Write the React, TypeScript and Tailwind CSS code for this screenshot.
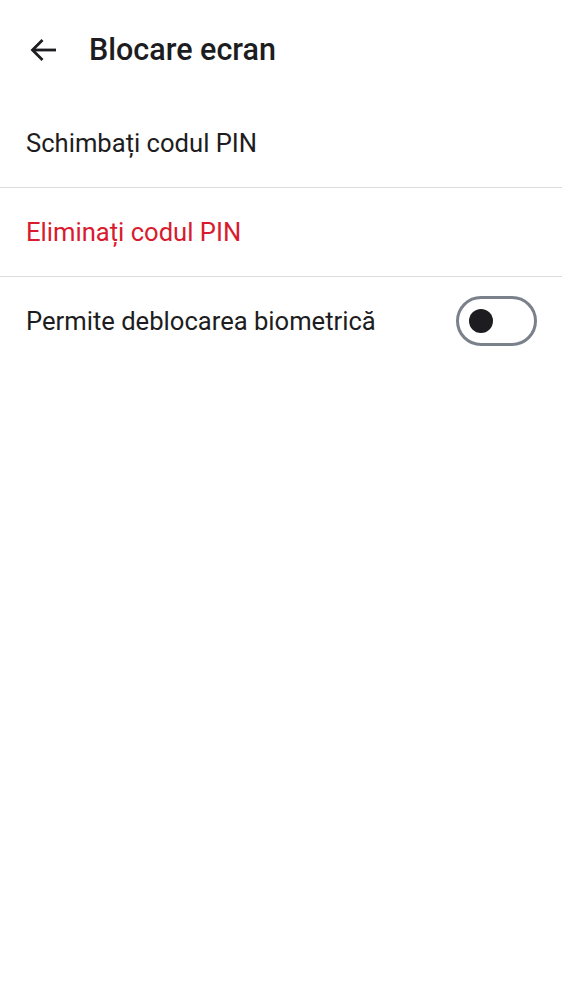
import { useState } from 'react';

export default function App() {
    const [biometric, setBiometric] = useState(false);

    return (
        <main className="min-h-screen w-[562px] bg-white text-[#1d1d21] font-['Roboto',sans-serif]">
            {/* Header */}
            <div className="flex h-[100px] items-center pl-[30px]">
                <button className="flex h-[26px] w-[27px] items-center justify-center">
                    <svg width="27" height="26" viewBox="0 0 27 26" fill="none" stroke="#1d1d21" strokeWidth="2.8" strokeLinecap="butt" strokeLinejoin="miter">
                        <path d="M26 13H3" />
                        <path d="M12.5 3 2.5 13l10 10" />
                    </svg>
                </button>
                <h1 className="ml-[32px] text-[30.5px] font-medium">Blocare ecran</h1>
            </div>

            {/* Options */}
            <ul>
                <li className="flex h-[88px] items-center border-b border-[#dcdde1] px-[26px]">
                    <span className="text-[25.6px]">Schimbați codul PIN</span>
                </li>
                <li className="flex h-[89px] items-center border-b border-[#dcdde1] px-[26px]">
                    <span className="text-[25.6px] text-[#d81b2f]">Eliminați codul PIN</span>
                </li>
                <li className="flex h-[88px] items-center justify-between pl-[26px] pr-[25px]">
                    <span className="text-[25.6px]">Permite deblocarea biometrică</span>
                    <button
                        onClick={() => setBiometric(!biometric)}
                        className="flex h-[50px] w-[81px] items-center rounded-full border-[3px] border-[#7a818b] px-[10px]"
                    >
                        <span className="h-[24px] w-[24px] rounded-full bg-[#1d1d21]" />
                    </button>
                </li>
            </ul>
        </main>
    );
}
